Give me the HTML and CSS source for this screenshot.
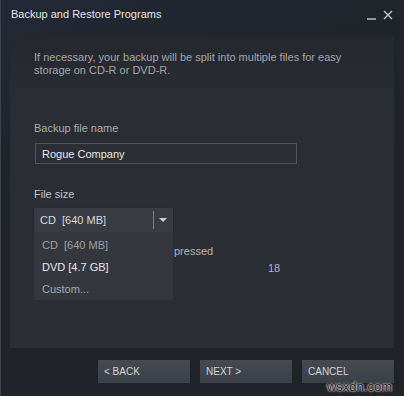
FILE: index.html
```html
<!DOCTYPE html>
<html lang="en">
<head>
  <meta charset="UTF-8" />
  <title>Backup and Restore Programs</title>
  <link rel="stylesheet" href="styles.css">
</head>
<body>
  <div class="window">
    <div class="titlebar">
      <span class="title">Backup and Restore Programs</span>
      <div class="controls">
        <svg class="min" width="9" height="10" viewBox="0 0 9 10"><path d="M0 9h9" stroke="#c4c7cb" stroke-width="1.4"/></svg>
        <svg class="close" width="10" height="10" viewBox="0 0 10 10"><path d="M1 1l8 8M9 1l-8 8" stroke="#c4c7cb" stroke-width="1.4"/></svg>
      </div>
    </div>

    <div class="panel">
      <p class="desc">If necessary, your backup will be split into multiple files for easy storage on CD-R or DVD-R.</p>

      <label class="field-label" for="fileName">Backup file name</label>
      <input class="text-input" type="text" id="fileName" value="Rogue Company" />

      <div class="field-label size-label">File size</div>
      <div class="select-wrap">
        <div class="select">
          <span class="select-value">CD&nbsp; [640 MB]</span>
          <span class="select-divider"></span>
          <svg class="select-arrow" width="8" height="5" viewBox="0 0 8 5"><path d="M0 0h8L4 4z" fill="#c9ccd0"/></svg>
        </div>
        <ul class="select-list">
          <li class="current">CD&nbsp; [640 MB]</li>
          <li class="hover">DVD [4.7 GB]</li>
          <li>Custom...</li>
        </ul>
      </div>

      <!-- rows partly hidden behind the open dropdown -->
      <div class="info-row compress">pressed</div>
      <div class="info-row count">18</div>
    </div>

    <div class="footer">
      <button class="btn">&lt; BACK</button>
      <button class="btn">NEXT &gt;</button>
      <button class="btn">CANCEL</button>
    </div>
    <div class="watermark">wsxdn.com</div>
  </div>
</body>
</html>
```

FILE: styles.css
```css
body {
  margin: 0;
  font-family: 'Liberation Sans', Arial, sans-serif;
  background: #1c1f25;
}
.window {
  position: relative;
  width: 404px;
  height: 396px;
  box-sizing: border-box;
  border-left: 1px solid #3a4250;
  background: linear-gradient(160deg, #222936 0%, #20242b 30%, #202328 100%);
  overflow: hidden;
}
.titlebar {
  height: 36px;
  display: flex;
  align-items: flex-start;
  justify-content: space-between;
}
.title {
  margin: 8px 0 0 10px;
  font-size: 11px;
  line-height: 13px;
  color: #e2e4e6;
}
.controls {
  display: flex;
  align-items: flex-start;
  gap: 7px;
  margin: 10px 11px 0 0;
}
.panel {
  position: relative;
  margin: 0 10px 0 9px;
  height: 312px;
  box-sizing: border-box;
  padding: 15px 0 0 24px;
  background: linear-gradient(180deg, #24272e 0%, #2a2d34 20%, #2b2e35 100%);
}
.desc {
  margin: 0;
  width: 330px;
  font-size: 11px;
  line-height: 13px;
  color: #a3a7ab;
}
.field-label {
  display: block;
  margin-top: 45px;
  font-size: 11px;
  line-height: 13px;
  color: #a9adb1;
}
.size-label {
  margin-top: 24px;
  color: #c2c5c9;
}
.text-input {
  display: block;
  margin: 8px 0 0 1px;
  width: 262px;
  height: 21px;
  box-sizing: border-box;
  padding: 0 6px;
  border: 1px solid #50545c;
  background: #2b2e35;
  font-family: 'Liberation Sans', Arial, sans-serif;
  font-size: 11px;
  color: #e6e8ea;
}
.select-wrap {
  position: relative;
  margin-top: 7px;
  width: 139px;
}
.select {
  display: flex;
  align-items: center;
  height: 24px;
  padding-left: 6px;
  background: #393c43;
  box-shadow: 0 1px 2px rgba(0,0,0,0.35);
}
.select-value {
  flex: 1;
  font-size: 11px;
  color: #d8dadc;
}
.select-divider {
  width: 1px;
  height: 18px;
  background: #7a7e84;
}
.select-arrow {
  margin: 1px 6px 0 5px;
}
.select-list {
  position: absolute;
  top: 24px;
  left: 0;
  z-index: 2;
  width: 139px;
  margin: 0;
  padding: 2px 0 0;
  list-style: none;
  background: #34373e;
  height: 68px;
  box-sizing: border-box;
}
.select-list li {
  height: 22px;
  line-height: 22px;
  padding-left: 8px;
  font-size: 11px;
  color: #a6aaae;
}
.select-list li.current {
  color: #9da1a5;
}
.select-list li.hover {
  color: #e8eaec;
}
.info-row {
  font-size: 11px;
  line-height: 13px;
  color: #b4b8bc;
}
.compress {
  margin-top: 13px;
  padding-left: 140px;
}
.count {
  margin-top: 4px;
  padding-left: 234px;
}
.footer {
  display: flex;
  justify-content: flex-end;
  gap: 10px;
  padding: 12px 10px 0 0;
}
.btn {
  width: 92px;
  height: 23px;
  padding: 0 0 0 6px;
  border: none;
  text-align: left;
  font-family: 'Liberation Sans', Arial, sans-serif;
  font-size: 10px;
  color: #d0d4d8;
  background: linear-gradient(180deg, #454a53 0%, #3c4048 100%);
}
.watermark {
  position: absolute;
  right: 12px;
  bottom: 2px;
  font-size: 13px;
  color: #1a1a1a;
  text-shadow: 0 0 2px #fff, 0 0 2px #fff;
}
```
